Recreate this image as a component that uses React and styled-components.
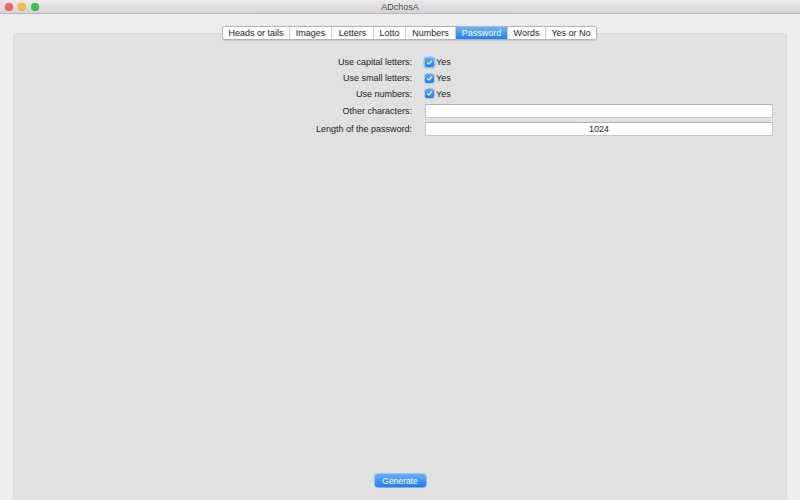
import React, { useState } from 'react';
import styled, { createGlobalStyle } from 'styled-components';

const GlobalStyle = createGlobalStyle`
  html, body, #root {
    margin: 0;
    padding: 0;
    height: 100%;
  }
  body {
    font-family: "Liberation Sans", Arial, sans-serif;
    font-size: 9px;
    color: #222;
    background: #ececec;
    overflow: hidden;
  }
`;

const Window = styled.div`
  height: 100%;
  display: flex;
  flex-direction: column;
  background: #ececec;
`;

const TitleBar = styled.div`
  height: 13px;
  flex-shrink: 0;
  display: flex;
  align-items: center;
  position: relative;
  background: linear-gradient(#ebe9eb, #d5d3d5);
  border-bottom: 1px solid #b9b7b9;
`;

const Lights = styled.div`
  display: flex;
  gap: 5px;
  padding-left: 5px;
`;

const Light = styled.span`
  width: 8px;
  height: 8px;
  border-radius: 50%;
  background: ${p => p.color};
  box-shadow: inset 0 0 0 0.5px rgba(0, 0, 0, 0.15);
`;

const Title = styled.div`
  position: absolute;
  left: 0;
  right: 0;
  text-align: center;
  color: #4d4d4d;
  font-size: 9px;
  pointer-events: none;
`;

const Content = styled.div`
  flex: 1;
  display: flex;
  flex-direction: column;
  padding: 12px 13px 0;
`;

const TabBar = styled.div`
  display: flex;
  justify-content: center;
  position: relative;
  z-index: 1;
  margin-bottom: -7px;
  padding-left: 19px;
`;

const Segments = styled.div`
  display: flex;
  height: 12px;
  border: 1px solid #b4b4b4;
  border-radius: 3px;
  background: #fff;
  overflow: hidden;
  box-shadow: 0 0.5px 1px rgba(0, 0, 0, 0.12);
`;

const Segment = styled.div`
  box-sizing: border-box;
  width: ${p => p.w}px;
  display: flex;
  align-items: center;
  justify-content: center;
  font-size: 9px;
  color: ${p => (p.active ? '#fff' : '#222')};
  background: ${p => (p.active ? 'linear-gradient(#6ab2fa, #1d7ff3)' : '#fff')};
  border-left: ${p => (p.first ? 'none' : '1px solid #c9c9c9')};
  cursor: default;
`;

const Panel = styled.div`
  flex: 1;
  display: flex;
  flex-direction: column;
  background: #e1e1e1;
  border: 1px solid #dadada;
  border-bottom: none;
  border-radius: 3px 3px 0 0;
  padding: 20px 13px 13px 0;
`;

const Form = styled.div`
  display: grid;
  grid-template-columns: 1fr 348px;
  grid-template-rows: 16px 16px 15px 19px 18px;
  column-gap: 13px;
`;

const Label = styled.div`
  display: flex;
  align-items: center;
  justify-content: flex-end;
  color: #222;
`;

const Control = styled.div`
  display: flex;
  align-items: center;
`;

const CheckLabel = styled.label`
  display: flex;
  align-items: center;
  gap: 2px;
  cursor: default;
`;

const Box = styled.span`
  width: 9px;
  height: 9px;
  border-radius: 2px;
  display: flex;
  align-items: center;
  justify-content: center;
  background: linear-gradient(#5aa9f8, #1b7cf1);
  box-shadow: ${p =>
    p.focused ? '0 0 0 1.5px rgba(90, 160, 240, 0.55)' : '0 0 0 0.5px rgba(0, 60, 160, 0.35)'};
`;

const TextField = styled.input`
  box-sizing: border-box;
  width: 100%;
  height: 14px;
  border: 1px solid #c4c4c4;
  border-top-color: #b0b0b0;
  background: #fff;
  font-family: "Liberation Sans", Arial, sans-serif;
  font-size: 9px;
  text-align: ${p => (p.center ? 'center' : 'left')};
  padding: 0 3px;
  outline: none;
  color: #222;
`;

const Footer = styled.div`
  margin-top: auto;
  display: flex;
  justify-content: center;
  padding-left: 13px;
`;

const Button = styled.button`
  width: 51px;
  height: 13px;
  padding: 0;
  border: none;
  border-radius: 3px;
  font-family: "Liberation Sans", Arial, sans-serif;
  font-size: 8.5px;
  color: #fff;
  background: linear-gradient(#66b0fb, #1c7df3);
  box-shadow: 0 0 0 0.5px rgba(0, 70, 170, 0.45), 0 0.5px 1px rgba(0, 0, 0, 0.15);
  cursor: default;
`;

const tabs = [
  ['Heads or tails', 66],
  ['Images', 42],
  ['Letters', 42],
  ['Lotto', 32],
  ['Numbers', 50],
  ['Password', 52],
  ['Words', 38],
  ['Yes or No', 51],
];

const CheckMark = () => (
  <svg width="7" height="7" viewBox="0 0 10 10">
    <path d="M2 5.2 L4.2 7.4 L8.2 2.4" fill="none" stroke="#fff" strokeWidth="1.6" strokeLinecap="round" strokeLinejoin="round" />
  </svg>
);

const CheckRow = ({ label, focused }) => (
  <>
    <Label>{label}</Label>
    <Control>
      <CheckLabel>
        <Box focused={focused}>
          <CheckMark />
        </Box>
        Yes
      </CheckLabel>
    </Control>
  </>
);

export default function App() {
  const [active, setActive] = useState('Password');
  const [other, setOther] = useState('');
  const [length, setLength] = useState('1024');

  return (
    <>
      <GlobalStyle />
      <Window>
        <TitleBar>
          <Lights>
            <Light color="#fc605c" />
            <Light color="#fdbc40" />
            <Light color="#34c84a" />
          </Lights>
          <Title>ADchosA</Title>
        </TitleBar>
        <Content>
          <TabBar>
            <Segments>
              {tabs.map(([t, w], i) => (
                <Segment key={t} w={w} first={i === 0} active={t === active} onClick={() => setActive(t)}>
                  {t}
                </Segment>
              ))}
            </Segments>
          </TabBar>
          <Panel>
            <Form>
              <CheckRow label="Use capital letters:" focused />
              <CheckRow label="Use small letters:" />
              <CheckRow label="Use numbers:" />
              <Label>Other characters:</Label>
              <Control>
                <TextField value={other} onChange={e => setOther(e.target.value)} />
              </Control>
              <Label>Length of the password:</Label>
              <Control>
                <TextField center value={length} onChange={e => setLength(e.target.value)} />
              </Control>
            </Form>
            <Footer>
              <Button>Generate</Button>
            </Footer>
          </Panel>
        </Content>
      </Window>
    </>
  );
}
